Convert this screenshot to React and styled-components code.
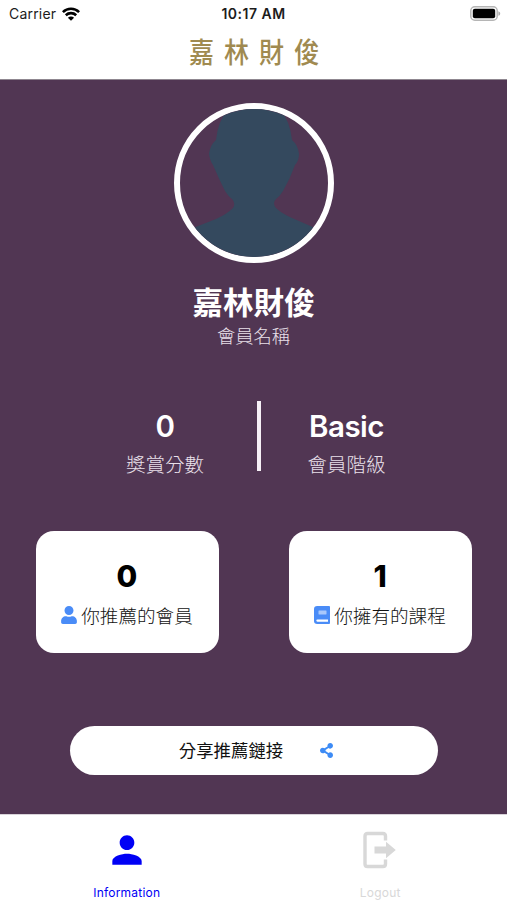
import React, { useState } from 'react';
import styled, { createGlobalStyle } from 'styled-components';
import { FaUser, FaShareAlt } from 'react-icons/fa';
import { MdPerson } from 'react-icons/md';

const GlobalStyle = createGlobalStyle`
  * {
    box-sizing: border-box;
  }

  body {
    margin: 0;
    background: #fff;
    font-family: Inter, "Noto Sans CJK TC", sans-serif;
  }
`;

const Screen = styled.div`
  display: flex;
  flex-direction: column;
  width: 507px;
  height: 900px;
  overflow: hidden;
`;

const StatusBar = styled.div`
  display: grid;
  grid-template-columns: 1fr auto 1fr;
  align-items: center;
  height: 27px;
  padding: 0 6px 0 9px;
  font-size: 14px;
  line-height: 27px;
  color: #1c1c1c;
`;

const Carrier = styled.div`
  display: flex;
  align-items: center;
  gap: 6px;
  letter-spacing: 0.2px;
`;

const Clock = styled.div`
  margin-right: 3px;
  font-weight: 600;
  letter-spacing: 0.5px;
`;

const Battery = styled.svg`
  justify-self: end;
`;

const Header = styled.header`
  height: 53px;
  border-bottom: 1px solid #8f8790;
`;

const Brand = styled.div`
  padding-left: 11px;
  text-align: center;
  font-size: 25px;
  font-weight: 500;
  line-height: 50px;
  letter-spacing: 10px;
  color: #a08a50;
  transform: translateY(1px) scaleY(1.15);
`;

const Profile = styled.main`
  display: flex;
  flex-direction: column;
  align-items: center;
  height: 734px;
  padding-top: 23px;
  background: #513653;
  color: #fff;
`;

const Avatar = styled.div`
  width: 160px;
  height: 160px;
  border: 6px solid #fff;
  border-radius: 50%;
  overflow: hidden;

  svg {
    display: block;
  }
`;

const Name = styled.h1`
  margin: 22px 0 0;
  font-size: 30.5px;
  font-weight: 700;
  line-height: 36px;
`;

const Label = styled.div`
  font-size: ${({ size }) => size}px;
  font-weight: 300;
  line-height: 26px;
  color: #e9e0ea;
`;

const MemberLabel = styled(Label)`
  margin-top: 2px;
`;

const Stats = styled.div`
  display: grid;
  grid-template-columns: 180px 4px 171px;
  column-gap: 1px;
  align-self: flex-start;
  height: 70px;
  margin: 52px 0 0 75px;
`;

const Stat = styled.div`
  display: flex;
  flex-direction: column;
  align-items: center;
  padding-top: 7px;
`;

const Divider = styled.div`
  height: 70px;
  margin-left: 1px;
  width: 4px;
  background: #f6f0f6;
`;

const StatValue = styled.div`
  margin-bottom: 8px;
  font-size: 29.5px;
  font-weight: 600;
  line-height: 36px;
  letter-spacing: -0.5px;
`;

const Cards = styled.div`
  display: flex;
  gap: 70px;
  margin-top: 60px;
`;

const Card = styled.div`
  display: flex;
  flex-direction: column;
  align-items: center;
  width: 183px;
  height: 122px;
  padding-top: 26px;
  border-radius: 18px;
  background: #fff;
  color: #000;
`;

const CardValue = styled.div`
  font-size: 30px;
  font-weight: 800;
  line-height: 38px;
`;

const CardLabel = styled.div`
  display: flex;
  align-items: center;
  gap: 4px;
  margin-top: 8px;
  font-size: 18.6px;
  font-weight: 300;
  line-height: 26px;
  color: #111;

  svg {
    width: 16px;
    height: 18px;
    margin-top: -2px;
    color: #4a8cf7;
  }
`;

const ShareButton = styled.button`
  display: flex;
  align-items: center;
  justify-content: center;
  gap: 37px;
  width: 368px;
  height: 49px;
  margin-top: 73px;
  padding: 0 0 0 5px;
  border: none;
  border-radius: 25px;
  background: #fff;
  font-family: inherit;
  font-size: 17.4px;
  line-height: 26px;
  color: #111;
  cursor: pointer;

  svg {
    width: 13px;
    height: 15px;
    color: #3d8bf5;
  }
`;

const TabBar = styled.nav`
  display: grid;
  grid-template-columns: 1fr 1fr;
  height: 86px;
  border-top: 1px solid #d8d3d9;
`;

const Tab = styled.button`
  display: flex;
  flex-direction: column;
  align-items: center;
  padding: 13px 0 0;
  border: none;
  background: none;
  font-family: inherit;
  font-size: 12px;
  line-height: 16px;
  letter-spacing: 0.2px;
  color: ${({ $active }) => ($active ? '#0000f5' : '#d8d8d8')};
  cursor: pointer;

  svg {
    margin-bottom: 13px;
  }
`;

const WifiIcon = () => (
  <svg width="18" height="14" viewBox="0 0 18 14" fill="none" stroke="#000" strokeWidth="2.6">
    <path d="M.9 5.1C5.4.7 12.6.7 17.1 5.1" />
    <path d="M3.8 8.2c2.9-2.8 7.5-2.8 10.4 0" />
    <path d="M9 13.8 5.9 10.7c1.7-1.6 4.5-1.6 6.2 0z" fill="#000" stroke="none" />
  </svg>
);

const BatteryIcon = () => (
  <Battery width="31" height="15" viewBox="0 0 31 15">
    <rect x=".8" y=".8" width="26.4" height="13.4" rx="4" fill="#fff" stroke="#b5b5b5" strokeWidth="1.5" />
    <rect x="2.8" y="2.8" width="22.4" height="9.4" rx="2" />
    <path d="M28.4 5.2c2.4.8 2.4 3.8 0 4.6z" fill="#aaa" />
  </Battery>
);

const BookIcon = () => (
  <svg viewBox="0 0 16 18">
    <path d="M3.200 0H15Q16 0 16 1V17Q16 18 15 18H3.200Q0 18 0 14.800V3.200Q0 0 3.200 0Z" fill="currentColor" />
    <rect x="4.500" y="4.500" width="8" height="4" rx=".4" fill="#a9c8fb" />
    <path d="M3.400 13.500H14V15.700H3.400Q2.300 15.700 2.300 14.600T3.400 13.500Z" fill="#fff" />
  </svg>
);

const Silhouette = () => (
  <svg width="148" height="148" viewBox="0 0 148 148">
    <path
      fill="#34495e"
      d="M48 0Q38 12 36 31Q30 36 29 45Q30 52 33 56Q39 70 45 82Q49 88 52 90Q56 94 53 99Q47 105 36 110L13 119L6 124V148H142V124L135 119L112 109Q101 104 96 99Q92 94 96 90Q100 87 103 82Q110 70 115 56Q119 52 119 45Q118 36 112 31Q110 12 100 0Z"
    />
  </svg>
);

const LogoutIcon = () => (
  <svg width="44" height="44" viewBox="0 0 44 44">
    <path
      d="M27.500 12.500V8Q27.500 5.500 25 5.500H9.500Q7 5.500 7 8V36Q7 38.500 9.500 38.500H25Q27.500 38.500 27.500 36V31.500"
      fill="none"
      stroke="currentColor"
      strokeWidth="3.400"
    />
    <path d="M16.500 18.400H28V13.700L37.800 22L28 30.300V25.600H16.500Z" fill="currentColor" />
  </svg>
);

const tabs = [
  { name: 'Information', icon: <MdPerson size={44} /> },
  { name: 'Logout', icon: <LogoutIcon /> },
];

const App = () => {
  const [activeTab, setActiveTab] = useState('Information');

  return (
    <Screen>
      <GlobalStyle />
      <StatusBar>
        <Carrier>
          Carrier
          <WifiIcon />
        </Carrier>
        <Clock>10:17 AM</Clock>
        <BatteryIcon />
      </StatusBar>
      <Header>
        <Brand>嘉林財俊</Brand>
      </Header>
      <Profile>
        <Avatar>
          <Silhouette />
        </Avatar>
        <Name>嘉林財俊</Name>
        <MemberLabel size={18.3}>會員名稱</MemberLabel>
        <Stats>
          <Stat>
            <StatValue>0</StatValue>
            <Label size={19.5}>獎賞分數</Label>
          </Stat>
          <Divider />
          <Stat>
            <StatValue>Basic</StatValue>
            <Label size={19.5}>會員階級</Label>
          </Stat>
        </Stats>
        <Cards>
          <Card>
            <CardValue>0</CardValue>
            <CardLabel>
              <FaUser />
              你推薦的會員
            </CardLabel>
          </Card>
          <Card>
            <CardValue>1</CardValue>
            <CardLabel>
              <BookIcon />
              你擁有的課程
            </CardLabel>
          </Card>
        </Cards>
        <ShareButton>
          分享推薦鏈接
          <FaShareAlt />
        </ShareButton>
      </Profile>
      <TabBar>
        {tabs.map(({ name, icon }) => (
          <Tab key={name} $active={name === activeTab} onClick={() => setActiveTab(name)}>
            {icon}
            {name}
          </Tab>
        ))}
      </TabBar>
    </Screen>
  );
};

export default App;
